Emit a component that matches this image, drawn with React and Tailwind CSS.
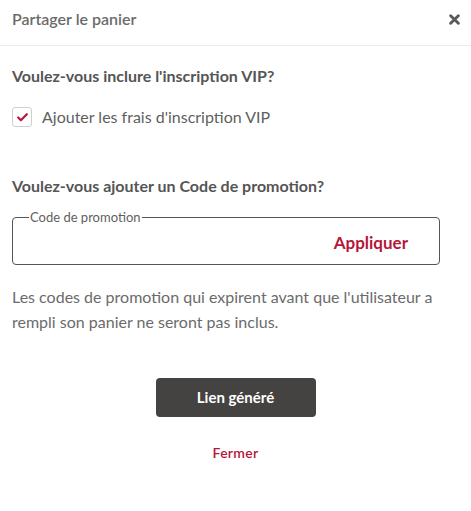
import { Check } from 'lucide-react';

const App = () => {
  return (
    <div className="w-[471px] h-[511px] bg-white text-[#5f5f5f]" style={{ fontFamily: 'Lato, "Noto Sans", sans-serif' }}>
      {/* Header */}
      <div className="flex items-center justify-between h-[46px] pl-3 pr-[11px] pb-[7px] border-b border-[#ebebeb]">
        <span className="text-[16px] font-semibold text-[#6b6b6b]">Partager le panier</span>
        <button className="text-[#5a5a5a]" title="Fermer">
          <svg viewBox="0 0 10 10" className="w-[11px] h-[11px]">
            <path d="M1.5 1.5 L8.5 8.5 M8.5 1.5 L1.5 8.5" stroke="currentColor" strokeWidth="2.6" strokeLinecap="round" />
          </svg>
        </button>
      </div>

      <div className="pl-3 pr-[31px]">
        {/* VIP */}
        <h3 className="mt-[19px] text-[16px] leading-[22px] font-bold text-[#555]">Voulez-vous inclure l'inscription VIP?</h3>
        <label className="mt-[18px] flex items-center gap-[10px]">
          <span className="flex items-center justify-center w-[20px] h-[20px] rounded-[3px] border border-[#cfcfcf]">
            <Check className="w-[13px] h-[13px] text-[#b5163a]" strokeWidth={4} />
          </span>
          <span className="text-[16px] text-[#5f5f5f]">Ajouter les frais d'inscription VIP</span>
        </label>

        {/* Promo */}
        <h3 className="mt-[46px] text-[16px] leading-[22px] font-bold text-[#555]">Voulez-vous ajouter un Code de promotion?</h3>
        <fieldset className="mt-[14px] h-[54px] border border-[#555] rounded-[4px] pl-[16px] pr-[5px] flex items-center justify-end">
          <legend className="px-[1px] text-[13px] leading-[13px] text-[#5f5f5f]">Code de promotion</legend>
          <button className="mr-[26px] -mt-[2px] text-[17px] font-bold text-[#b5163a]">Appliquer</button>
        </fieldset>

        <p className="mt-[19px] text-[16px] leading-[25px] text-[#6b6b6b]">
          Les codes de promotion qui expirent avant que l'utilisateur a rempli son panier ne seront pas inclus.
        </p>

        {/* Actions */}
        <div className="mt-[44px] pl-[19px] flex flex-col items-center">
          <button className="w-[160px] h-[39px] rounded-[4px] bg-[#454341] text-white text-[15px] font-bold">Lien généré</button>
          <button className="mt-[25px] text-[14px] font-semibold text-[#b5163a] tracking-[0.3px]">Fermer</button>
        </div>
      </div>
    </div>
  );
};

export default App;
